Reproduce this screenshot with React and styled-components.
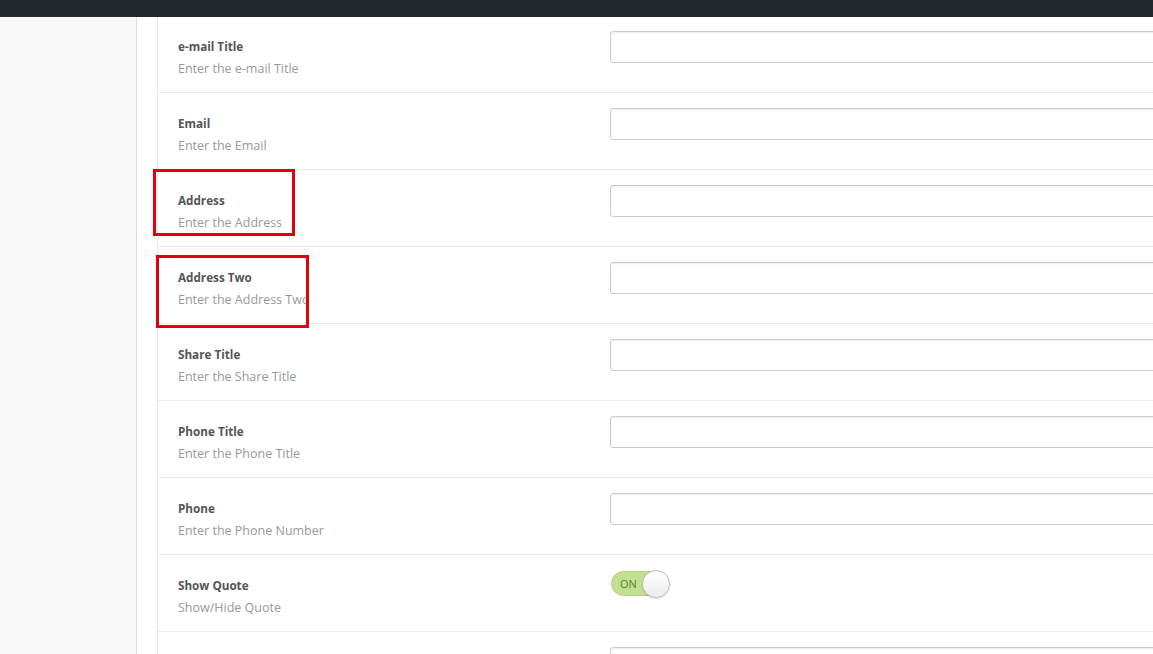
import React from 'react';
import styled, { createGlobalStyle } from 'styled-components';

const GlobalStyle = createGlobalStyle`
    html, body {
        margin: 0;
        padding: 0;
        background: #fff;
        overflow: hidden;
        font-family: "Open Sans", "Liberation Sans", sans-serif;
    }
`;

const Page = styled.div`
    width: 1153px;
    height: 654px;
    display: flex;
    flex-direction: column;
    overflow: hidden;
`;

const TopBar = styled.div`
    height: 17px;
    flex: none;
    background: #23282d;
    position: relative;
    z-index: 1;
`;

const Body = styled.div`
    flex: 1;
    display: flex;
    min-height: 0;
`;

const Sidebar = styled.div`
    width: 136px;
    flex: none;
    background: #f9f9f9;
    border-right: 1px solid #dcdcdc;
`;

const Main = styled.div`
    flex: 1;
    padding-left: 20px;
    background: #fff;
    position: relative;
`;

const Panel = styled.div`
    border-left: 1px solid #e8e8e8;
    margin-top: -1px;
`;

const Row = styled.div`
    display: flex;
    height: 76px;
    border-bottom: 1px solid #ebebeb;
`;

const LabelCol = styled.div`
    width: 452px;
    flex: none;
    padding: 21px 0 0 20px;
    box-sizing: border-box;
`;

const Title = styled.div`
    font-size: 11.7px;
    font-weight: 700;
    color: #555;
    line-height: 18px;
`;

const Desc = styled.div`
    font-size: 12.5px;
    color: #999;
    line-height: 18px;
    margin-top: 5px;
    white-space: nowrap;
`;

const FieldCol = styled.div`
    flex: 1;
    padding-top: 15px;
`;

const Input = styled.input`
    display: block;
    width: 600px;
    height: 32px;
    box-sizing: border-box;
    border: 1px solid #ccc;
    border-radius: 3px;
    background: #fff;
    box-shadow: inset 0 1px 2px rgba(0, 0, 0, 0.07);
    font-family: inherit;
    padding: 0 8px;
`;

const Toggle = styled.div`
    margin-top: 1px;
    width: 58px;
    height: 25px;
    position: relative;
    border-radius: 13px;
    background: #c2e190;
    border: 1px solid #b4d281;
    box-sizing: border-box;
    margin-left: 1px;
    span {
        position: absolute;
        left: 8px;
        top: 4px;
        font-size: 11px;
        color: #5f7f33;
        line-height: 15px;
    }
`;

const Knob = styled.div`
    position: absolute;
    right: -2px;
    top: -2px;
    width: 28px;
    height: 28px;
    border-radius: 50%;
    background: linear-gradient(#fff, #ececec);
    border: 1px solid #bbb;
    box-sizing: border-box;
    box-shadow: 0 1px 2px rgba(0, 0, 0, 0.15);
`;

const Highlight = styled.div`
    position: absolute;
    border: 3px solid #e0000f;
    box-sizing: border-box;
    pointer-events: none;
`;

const fields = [
    { title: 'e-mail Title', desc: 'Enter the e-mail Title' },
    { title: 'Email', desc: 'Enter the Email' },
    { title: 'Address', desc: 'Enter the Address' },
    { title: 'Address Two', desc: 'Enter the Address Two' },
    { title: 'Share Title', desc: 'Enter the Share Title' },
    { title: 'Phone Title', desc: 'Enter the Phone Title' },
    { title: 'Phone', desc: 'Enter the Phone Number' },
    { title: 'Show Quote', desc: 'Show/Hide Quote', toggle: true },
    { title: '', desc: '' },
];

const App = () => {
    return (
        <Page>
            <GlobalStyle />
            <TopBar />
            <Body>
                <Sidebar />
                <Main>
                    <Panel>
                        {fields.map((f, i) => (
                            <Row key={i}>
                                <LabelCol>
                                    {f.title && <Title>{f.title}</Title>}
                                    {f.desc && <Desc>{f.desc}</Desc>}
                                </LabelCol>
                                <FieldCol>
                                    {f.toggle ? (
                                        <Toggle>
                                            <span>ON</span>
                                            <Knob />
                                        </Toggle>
                                    ) : (
                                        <Input type="text" />
                                    )}
                                </FieldCol>
                            </Row>
                        ))}
                    </Panel>
                    <Highlight style={{ left: 16, top: 152, width: 142, height: 67 }} />
                    <Highlight style={{ left: 19, top: 238, width: 153, height: 73 }} />
                </Main>
            </Body>
        </Page>
    );
};

export default App;
